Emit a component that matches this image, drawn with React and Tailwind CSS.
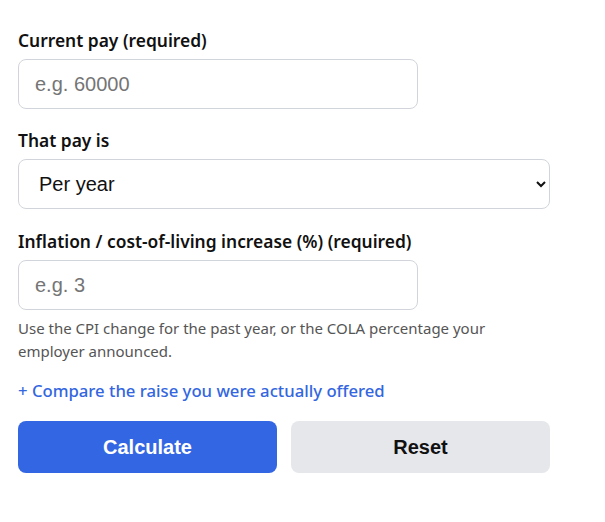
export default function App() {
  return (
    <main className="bg-white min-h-screen text-[#111] px-[18px] pt-[28px]" style={{ fontFamily: '"Noto Sans", sans-serif' }}>
      <form className="w-[532px]" onSubmit={(e) => e.preventDefault()}>
        <label className="block text-[17.4px] font-semibold leading-6 mb-[7px]">Current pay (required)</label>
        <input
          type="text"
          placeholder="e.g. 60000"
          className="block w-[400px] h-[50px] px-4 rounded-lg border border-[#d1d5db] text-[20px] placeholder:text-[#757575] outline-none"
          style={{ fontFamily: '"Liberation Sans", Arial, sans-serif' }}
        />

        <label className="block text-[17.4px] font-semibold leading-6 mt-[19px] mb-[7px]">That pay is</label>
        <select
          defaultValue="year"
          className="block w-[532px] h-[50px] pl-4 pr-[14px] rounded-lg border border-[#d1d5db] bg-white text-[20px] text-[#111] outline-none"
          style={{ fontFamily: '"Liberation Sans", Arial, sans-serif' }}
        >
          <option value="year">Per year</option>
          <option value="month">Per month</option>
          <option value="hour">Per hour</option>
        </select>

        <label className="block text-[17.4px] font-semibold leading-6 mt-[20px] mb-[7px]">
          Inflation / cost-of-living increase (%) (required)
        </label>
        <input
          type="text"
          placeholder="e.g. 3"
          className="block w-[400px] h-[50px] px-4 rounded-lg border border-[#d1d5db] text-[20px] placeholder:text-[#757575] outline-none"
          style={{ fontFamily: '"Liberation Sans", Arial, sans-serif' }}
        />
        <p className="mt-[7px] w-[500px] text-[15px] leading-[23px] text-[#555]">
          Use the CPI change for the past year, or the COLA percentage your employer announced.
        </p>

        <button type="button" className="block mt-[16px] text-[16.7px] font-medium leading-6 text-[#3366e0]">
          + Compare the raise you were actually offered
        </button>

        <div className="grid grid-cols-2 gap-[14px] mt-[18px]" style={{ fontFamily: '"Liberation Sans", Arial, sans-serif' }}>
          <button type="submit" className="h-[52px] rounded-lg bg-[#3366e3] text-white text-[20px] font-bold">
            Calculate
          </button>
          <button type="button" className="h-[52px] rounded-lg bg-[#e5e7eb] text-[#111] text-[20px] font-bold">
            Reset
          </button>
        </div>
      </form>
    </main>
  );
}
